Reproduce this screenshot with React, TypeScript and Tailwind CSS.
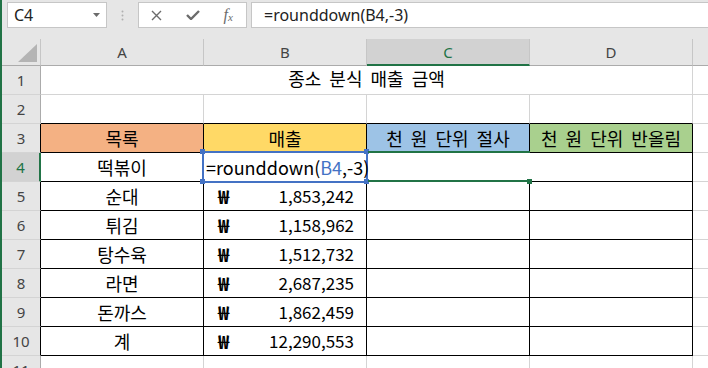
import React from 'react'

const KR = "font-['Noto_Sans_CJK_KR',sans-serif]"
const UI = "font-['Noto_Sans','Noto_Sans_CJK_KR',sans-serif]"

const sales = [
  { name: '순대', amount: '1,853,242' },
  { name: '튀김', amount: '1,158,962' },
  { name: '탕수육', amount: '1,512,732' },
  { name: '라면', amount: '2,687,235' },
  { name: '돈까스', amount: '1,862,459' },
  { name: '계', amount: '12,290,553' },
]

function RowHead({ n, tone = 'plain' }: { n: number; tone?: 'plain' | 'table' | 'active' }) {
  const cls =
    tone === 'active'
      ? 'bg-[#d2d2d2] text-[#217346] border-r-2 border-r-[#217346]'
      : tone === 'table'
        ? 'bg-[#e6e6e6] text-[#444] border-r border-r-black'
        : 'bg-[#e6e6e6] text-[#444] border-r border-r-[#ababab]'
  return (
    <div className={`w-[39px] h-full shrink-0 flex items-center justify-center border-b border-b-[#d4d4d4] text-[15px] ${UI} ${cls}`}>
      {n}
    </div>
  )
}

function Cell({ children, cls = '' }: { children?: React.ReactNode; cls?: string }) {
  return <div className={`w-[163px] h-full shrink-0 flex items-center border-r border-b ${cls}`}>{children}</div>
}

function Rest({ cls = 'border-b-[#d4d4d4]' }: { cls?: string }) {
  return <div className={`flex-1 h-full border-b ${cls}`} />
}

export default function App() {
  return (
    <div className={`relative flex w-[708px] h-[368px] overflow-hidden bg-white ${KR}`}>
      <div className="w-[2px] shrink-0 bg-[#217346]" />
      <div className="flex-1 flex flex-col">
        {/* formula bar */}
        <div className="h-[39px] shrink-0 flex items-start pt-[2px] bg-[#e6e6e6]">
          <div className={`ml-[5px] w-[100px] h-[26px] flex items-center justify-between pl-[6px] pr-[6px] bg-white border border-[#c6c6c6] text-[16px] text-[#222] ${UI}`}>
            <span>C4</span>
            <svg width="7" height="4" viewBox="0 0 7 4"><polygon points="0,0 7,0 3.5,4" fill="#6b6b6b" /></svg>
          </div>
          <div className="w-[31px] h-[26px] flex items-center justify-center">
            <svg width="3" height="11" viewBox="0 0 3 11">
              <circle cx="1.5" cy="1.5" r="1" fill="#b0b0b0" />
              <circle cx="1.5" cy="5.5" r="1" fill="#b0b0b0" />
              <circle cx="1.5" cy="9.5" r="1" fill="#b0b0b0" />
            </svg>
          </div>
          <div className="w-[109px] h-[26px] flex bg-white border border-[#c6c6c6]">
            <span className="w-[36px] flex items-center justify-center">
              <svg width="11" height="11" viewBox="0 0 11 11">
                <path d="M1 1 L10 10 M10 1 L1 10" stroke="#6b6b6b" strokeWidth="1.4" fill="none" />
              </svg>
            </span>
            <span className="w-[36px] flex items-center justify-center">
              <svg width="14" height="10" viewBox="0 0 14 10">
                <path d="M1 5 L5 9 L13 1" stroke="#6b6b6b" strokeWidth="2.4" fill="none" />
              </svg>
            </span>
            <span className="w-[36px] flex items-center justify-center font-['Liberation_Serif',serif] italic text-[#6b6b6b]">
              <span className="text-[16px] leading-none">f</span>
              <span className="text-[11px] leading-none mt-[4px]">x</span>
            </span>
          </div>
          <div className={`ml-[4px] -mr-[2px] flex-1 h-[26px] flex items-center pl-[12px] bg-white border border-[#c6c6c6] text-[16px] text-[#222] ${UI}`}>
            =rounddown(B4,-3)
          </div>
        </div>

        {/* column headers */}
        <div className={`h-[27px] shrink-0 flex bg-[#e6e6e6] text-[15px] text-[#444] ${UI}`}>
          <div className="w-[39px] h-full shrink-0 flex items-end justify-end pr-[3px] pb-[3px] border-r border-b border-r-[#c6c6c6] border-b-[#ababab]">
            <svg width="19" height="18" viewBox="0 0 19 18"><polygon points="19,0 19,18 0,18" fill="#b4b4b4" /></svg>
          </div>
          <div className="w-[163px] h-full shrink-0 flex items-center justify-center border-r border-b border-r-[#c6c6c6] border-b-[#ababab]">A</div>
          <div className="w-[163px] h-full shrink-0 flex items-center justify-center border-r border-b border-r-[#c6c6c6] border-b-[#ababab]">B</div>
          <div className="w-[163px] h-full shrink-0 flex items-center justify-center pt-[2px] border-r border-r-[#c6c6c6] border-b-2 border-b-[#217346] bg-[#d2d2d2] text-[#217346]">C</div>
          <div className="w-[163px] h-full shrink-0 flex items-center justify-center border-r border-b border-r-[#c6c6c6] border-b-[#ababab]">D</div>
          <div className="flex-1 h-full border-b border-b-[#ababab]" />
        </div>

        {/* row 1 */}
        <div className="h-[29px] shrink-0 flex text-[18px] text-black">
          <RowHead n={1} />
          <div className="w-[652px] h-full shrink-0 flex items-center justify-center pb-[3px] border-r border-b border-[#d4d4d4] [word-spacing:4px]">
            종소 분식 매출 금액
          </div>
          <Rest />
        </div>

        {/* row 2 */}
        <div className="h-[29px] shrink-0 flex">
          <RowHead n={2} />
          <Cell cls="border-r-[#d4d4d4] border-b-black" />
          <Cell cls="border-r-[#d4d4d4] border-b-black" />
          <Cell cls="border-r-[#d4d4d4] border-b-black" />
          <Cell cls="border-r-[#d4d4d4] border-b-black" />
          <Rest />
        </div>

        {/* row 3 */}
        <div className="h-[29px] shrink-0 flex text-[18px] text-black [word-spacing:4px]">
          <RowHead n={3} tone="table" />
          <Cell cls="justify-center border-black bg-[#f4b183]">목록</Cell>
          <Cell cls="justify-center border-black bg-[#ffd966]">매출</Cell>
          <Cell cls="justify-center border-black bg-[#9dc3e6]">천 원 단위 절사</Cell>
          <Cell cls="justify-center border-black bg-[#a9d08e]">천 원 단위 반올림</Cell>
          <Rest />
        </div>

        {/* row 4 */}
        <div className="h-[29px] shrink-0 flex text-[18px] text-black">
          <RowHead n={4} tone="active" />
          <Cell cls="justify-center border-black">떡볶이</Cell>
          <Cell cls="pl-[2px] border-black overflow-visible whitespace-nowrap">
            <span className="relative z-10">
              =rounddown(<span className="text-[#4472c4]">B4</span>,-3)
            </span>
          </Cell>
          <Cell cls="border-r-white border-b-black" />
          <Cell cls="border-black" />
          <Rest />
        </div>

        {/* rows 5-10 */}
        {sales.map((s, i) => (
          <div key={s.name} className="h-[29px] shrink-0 flex text-[18px] text-black">
            <RowHead n={i + 5} tone="table" />
            <Cell cls="justify-center border-black">{s.name}</Cell>
            <Cell cls="justify-between pl-[14px] pr-[12px] border-black">
              <span className="font-bold text-[19px]">₩</span>
              <span className="text-[17px]">{s.amount}</span>
            </Cell>
            <Cell cls="border-black" />
            <Cell cls="border-black" />
            <Rest />
          </div>
        ))}

        {/* row 11 */}
        <div className="h-[29px] shrink-0 flex">
          <RowHead n={11} />
          <Cell cls="border-[#d4d4d4]" />
          <Cell cls="border-[#d4d4d4]" />
          <Cell cls="border-[#d4d4d4]" />
          <Cell cls="border-[#d4d4d4]" />
          <Rest />
        </div>
      </div>

      {/* reference highlight around B4 */}
      <div className="absolute left-[202px] top-[151px] w-[166px] h-[32px] border-2 border-[#4472c4]" />
      <div className="absolute left-[200px] top-[149px] w-[5px] h-[5px] bg-[#4472c4]" />
      <div className="absolute left-[364px] top-[149px] w-[5px] h-[5px] bg-[#4472c4]" />
      <div className="absolute left-[200px] top-[179px] w-[5px] h-[5px] bg-[#4472c4]" />
      <div className="absolute left-[364px] top-[179px] w-[5px] h-[5px] bg-[#4472c4]" />

      {/* active cell C4 */}
      <div className="absolute left-[368px] top-[151px] w-[162px] h-[2px] bg-[#217346]" />
      <div className="absolute left-[368px] top-[180px] w-[160px] h-[2px] bg-[#217346]" />
      <div className="absolute left-[527px] top-[179px] w-[5px] h-[5px] bg-[#217346]" />
    </div>
  )
}
